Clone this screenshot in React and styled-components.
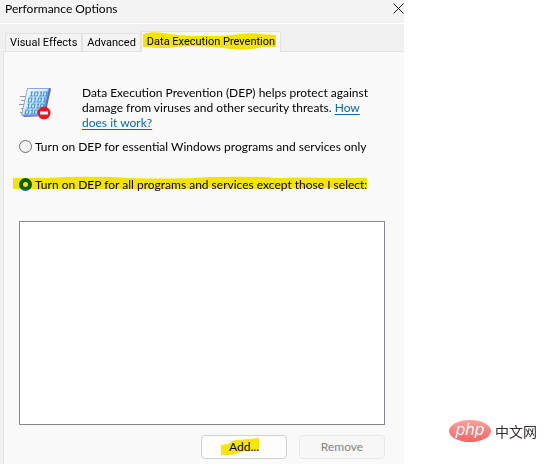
import React, { useState } from "react";
import styled, { createGlobalStyle } from "styled-components";

const COLORS = {
  text: "#000000",
  link: "#0067c0",
  frame: "#f0f0f0",
  panel: "#f9f9f9",
  line: "#e2e2e2",
  marker: "#fce800",
};

const GlobalStyle = createGlobalStyle`
  * {
    box-sizing: border-box;
  }
  body {
    margin: 0;
    background-color: #ffffff;
    color: ${COLORS.text};
    font-family: Lato, "Noto Sans", sans-serif;
    font-size: 12px;
    line-height: 15px;
  }
`;

// Layout
const Page = styled.div`
  display: flex;
  min-height: 100vh;
`;

const Dialog = styled.main`
  display: flex;
  flex-direction: column;
  flex: 1;
  min-width: 0;
  background-color: ${COLORS.frame};
`;

const Side = styled.aside`
  display: flex;
  align-items: flex-end;
  flex: 0 0 144px;
  padding: 0 0 22px 45px;
`;

// Title bar
const TitleBar = styled.header`
  display: flex;
  justify-content: space-between;
  height: 24px;
  padding-left: 5px;
  background-color: #f3f3f3;
  border-bottom: 1px solid #ffffff;
  h1 {
    margin: 0;
    padding-top: 1px;
    font-size: 12px;
    font-weight: 400;
    line-height: 15px;
  }
`;

const CloseButton = styled.button`
  width: 11px;
  height: 16px;
  padding: 0;
  border: 0;
  background: none;
  svg {
    display: block;
  }
`;

// Tabs
const TabList = styled.div`
  display: flex;
  align-items: flex-end;
  height: 27px;
  padding-left: 5px;
`;

const Tab = styled.button`
  position: relative;
  height: ${({ $active }) => ($active ? "21px" : "18px")};
  margin-bottom: ${({ $active }) => ($active ? "-1px" : "0")};
  padding: 0 ${({ $active }) => ($active ? "5px" : "4px")};
  border: 1px solid ${COLORS.line};
  border-bottom: 0;
  background-color: ${({ $active }) => ($active ? COLORS.panel : "#f3f3f3")};
  color: ${COLORS.text};
  font-family: Roboto, "Noto Sans", sans-serif;
  font-size: 11px;
  line-height: 16px;
  white-space: nowrap;
  & + & {
    border-left-width: ${({ $active }) => ($active ? "1px" : "0")};
  }
`;

const Panel = styled.section`
  display: flex;
  flex-direction: column;
  flex: 1;
  margin-left: 3px;
  padding: 33px 19px 5px 15px;
  border: solid ${COLORS.line};
  border-width: 1px 0 0 1px;
  background-color: ${COLORS.panel};
`;

const Intro = styled.div`
  display: flex;
  gap: 30px;
  margin-bottom: 8px;
  svg {
    flex: none;
  }
  p {
    margin: 0;
    max-width: 290px;
  }
  a {
    color: ${COLORS.link};
    text-underline-offset: 2px;
  }
`;

const Option = styled.label`
  position: relative;
  display: flex;
  align-items: center;
  align-self: flex-start;
  gap: 3px;
  height: 16px;
  margin-bottom: 22px;
  white-space: nowrap;
`;

const Radio = styled.input.attrs({ type: "radio" })`
  appearance: none;
  flex: none;
  width: 13px;
  height: 13px;
  margin: 0;
  border: 1px solid #6f6f6f;
  border-radius: 50%;
  background-color: #f3f3f3;
  &:checked {
    border: 4px solid ${COLORS.link};
    background-color: #ffffff;
  }
`;

const ProgramList = styled.select`
  flex: 1;
  min-height: 203px;
  margin: 7px 0 10px;
  border: 1px solid #828790;
  border-radius: 0;
  background-color: #ffffff;
  outline: 0;
`;

const Actions = styled.div`
  display: flex;
  justify-content: flex-end;
  gap: 12px;
`;

const Button = styled.button`
  position: relative;
  width: 86px;
  height: 24px;
  padding: 0 0 2px;
  border: 1px solid #d0d0d0;
  border-radius: 4px;
  background-color: #fdfdfd;
  color: ${COLORS.text};
  font: inherit;
  &:disabled {
    border-color: #e8e8e8;
    background-color: #f7f7f7;
    color: #838383;
  }
`;

// Felt-tip stroke drawn over a label, the text shows through
const Marker = styled.svg`
  position: absolute;
  top: ${({ $top }) => $top};
  left: ${({ $left }) => $left};
  width: ${({ $width }) => $width};
  height: ${({ $height }) => $height};
  fill: ${COLORS.marker};
  mix-blend-mode: multiply;
  pointer-events: none;
`;

const Brand = styled.div`
  display: flex;
  align-items: center;
  gap: 4px;
  color: #332c2b;
  font-family: "Noto Sans CJK SC", sans-serif;
  font-size: 14px;
  line-height: 22px;
  white-space: nowrap;
`;

const BrandMark = styled.span`
  width: 42px;
  height: 22px;
  border-radius: 50%;
  background: linear-gradient(#f8a29b, #f96464);
  color: #ffffff;
  font-family: "Liberation Sans", sans-serif;
  font-size: 17px;
  font-style: italic;
  line-height: 20px;
  text-align: center;
`;

const DepIcon = () => (
  <svg width="33" height="36" viewBox="0 0 33 36" aria-hidden="true">
    <defs>
      <linearGradient id="sheet" x1="0" y1="0" x2="1" y2="1">
        <stop offset="0" stopColor="#ffffff" />
        <stop offset="1" stopColor="#a9d2fa" />
      </linearGradient>
    </defs>
    <g transform="translate(0 3)">
      <path
        d="M1 8.500h7M2 12.500h5M0 16.500h6M2 20.500h4M1 24.500h4"
        stroke="#8d96a3"
      />
      <path d="M9 0h22l1 1-6 27-21 1-2-2z" fill="#5a6ebc" />
      <path d="M8.500 .5h21l-6 26.500H2.500z" fill="url(#sheet)" stroke="#90a5df" />
      <g fill="none" stroke="#3c95e6" strokeWidth="1.200">
        <path d="M11.500 4.500l1.500-.5-.8 4M10.500 8h3.500M16 4h3l-.8 4h-3zM21 4.500l1.500-.5-.8 4M20 8h3.500M25 4h3l-.8 4h-3z" />
        <path d="M10 10h3l-.8 4h-3zM15 10.500l1.500-.5-.8 4M14 14h3.500M19.500 10h3l-.8 4h-3zM24.500 10.500l1.500-.5-.8 4M23.500 14h3" />
        <path d="M8.500 16.500l1.500-.5-.8 4M7.500 20H11M13 16h3l-.8 4h-3zM18 16.500l1.500-.5-.8 4M17 20h3.500M22 16h3l-.8 4h-3z" />
        <path d="M7 22h3l-.8 4h-3zM12 22.500l1.500-.5-.8 4M11 26h3.500M16 22h3l-.8 4h-3z" />
      </g>
      <circle cx="25" cy="25" r="6.500" fill="#ee1620" />
      <path d="M21 23.500h8v3h-8z" fill="#ffffff" />
    </g>
  </svg>
);

const CloseIcon = () => (
  <svg width="11" height="11" viewBox="0 0 11 11" aria-hidden="true">
    <path d="M.5 .5l10 10M10.500 .5l-10 10" stroke="#1a1a1a" />
  </svg>
);

const App = () => {
  const [mode, setMode] = useState("all");

  return (
    <Page>
      <GlobalStyle />
      <Dialog>
        <TitleBar>
          <h1>Performance Options</h1>
          <CloseButton type="button" aria-label="Close">
            <CloseIcon />
          </CloseButton>
        </TitleBar>
        <TabList role="tablist">
          <Tab type="button" role="tab" aria-selected="false">
            Visual Effects
          </Tab>
          <Tab type="button" role="tab" aria-selected="false">
            Advanced
          </Tab>
          <Tab type="button" role="tab" aria-selected="true" $active>
            Data Execution Prevention
            <Marker
              viewBox="0 0 133 19"
              preserveAspectRatio="none"
              $top="-1px"
              $left="1px"
              $width="133px"
              $height="19px"
            >
              <path d="M0 3Q8 0 20 2Q35 5 60 5Q80 5 90 4Q105 1 117 3L133 4V16H120Q105 20 88 18Q55 14 35 16Q15 18 5 16L0 16z" />
            </Marker>
          </Tab>
        </TabList>
        <Panel role="tabpanel">
          <Intro>
            <DepIcon />
            <p>
              Data Execution Prevention (DEP) helps protect against damage from
              viruses and other security threats. <a href="#how">How does it work?</a>
            </p>
          </Intro>
          <Option>
            <Radio
              name="dep"
              checked={mode === "essential"}
              onChange={() => setMode("essential")}
            />
            Turn on DEP for essential Windows programs and services only
          </Option>
          <Option>
            <Radio
              name="dep"
              checked={mode === "all"}
              onChange={() => setMode("all")}
            />
            Turn on DEP for all programs and services except those I select:
            <Marker
              viewBox="0 0 354 14"
              preserveAspectRatio="none"
              $top="0"
              $left="-6px"
              $width="354px"
              $height="14px"
            >
              <path d="M0 2H34Q60 0 95 1Q150 4 200 1Q240 0 265 2Q290 1 320 2L354 2V13L300 12Q240 14 200 12Q160 14 100 13H0z" />
            </Marker>
          </Option>
          <ProgramList size="10" aria-label="Excluded programs" />
          <Actions>
            <Button type="button">
              Add...
              <Marker
                viewBox="0 0 38 20"
                preserveAspectRatio="none"
                $top="2px"
                $left="19px"
                $width="38px"
                $height="18px"
              >
                <path d="M0 8L8 6Q12 1 20 2L38 0V14Q25 13 17 17Q10 20 0 19z" />
              </Marker>
            </Button>
            <Button type="button" disabled>
              Remove
            </Button>
          </Actions>
        </Panel>
      </Dialog>
      <Side>
        <Brand>
          <BrandMark>php</BrandMark>
          中文网
        </Brand>
      </Side>
    </Page>
  );
};

export default App;
